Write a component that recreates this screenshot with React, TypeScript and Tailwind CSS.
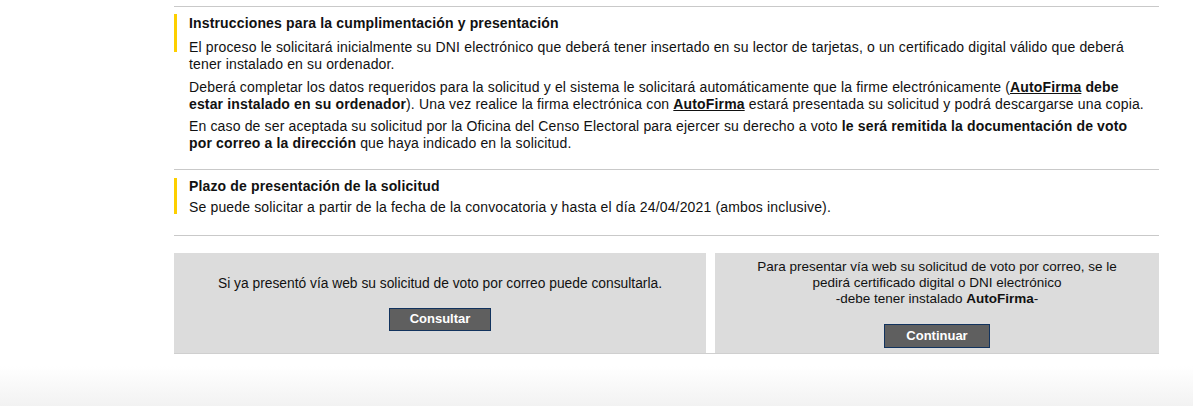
export default function App() {
  return (
    <div className="min-h-screen bg-white text-[#111] font-['Liberation_Sans',Arial,sans-serif]">
      <div className="ml-[174px] w-[985px] pt-[6px]">
        <hr className="border-0 border-t border-[#c9c9c9]" />

        <section className="grid grid-cols-[3px_1fr] gap-x-[12px] pt-[7px] pb-[17px]">
          <div className="h-[38px] bg-[#fdcf00]" />
          <div className="text-[14px] leading-[17px] tracking-[0.15px] whitespace-nowrap">
            <h2 className="font-bold pt-[1px] mb-[7px]">Instrucciones para la cumplimentación y presentación</h2>
            <p className="mb-[6px]">
              El proceso le solicitará inicialmente su DNI electrónico que deberá tener insertado en su lector de tarjetas, o un certificado digital válido que deberá
              <br />
              tener instalado en su ordenador.
            </p>
            <p className="mb-[5px]">
              Deberá completar los datos requeridos para la solicitud y el sistema le solicitará automáticamente que la firme electrónicamente (<a className="font-bold underline">AutoFirma</a> <strong>debe</strong>
              <br />
              <strong>estar instalado en su ordenador</strong>). Una vez realice la firma electrónica con <a className="font-bold underline">AutoFirma</a> estará presentada su solicitud y podrá descargarse una copia.
            </p>
            <p>
              En caso de ser aceptada su solicitud por la Oficina del Censo Electoral para ejercer su derecho a voto <strong>le será remitida la documentación de voto</strong>
              <br />
              <strong>por correo a la dirección</strong> que haya indicado en la solicitud.
            </p>
          </div>
        </section>

        <hr className="border-0 border-t border-[#c9c9c9]" />

        <section className="grid grid-cols-[3px_1fr] gap-x-[12px] pt-[8px] pb-[19px]">
          <div className="h-[36px] bg-[#fdcf00]" />
          <div className="text-[14px] leading-[17px] tracking-[0.15px]">
            <h2 className="font-bold mb-[4px]">Plazo de presentación de la solicitud</h2>
            <p>Se puede solicitar a partir de la fecha de la convocatoria y hasta el día 24/04/2021 (ambos inclusive).</p>
          </div>
        </section>

        <hr className="border-0 border-t border-[#c9c9c9]" />

        <div className="mt-[17px] flex gap-[9px] border-b border-[#cfcfcf] leading-[16px] text-center">
          <div className="w-[532px] h-[100px] bg-[#dcdcdc] flex flex-col items-center justify-center">
            <p className="text-[13.8px]">Si ya presentó vía web su solicitud de voto por correo puede consultarla.</p>
            <button className="mt-[16px] h-[23px] px-[20px] bg-[#5f5f5f] border border-[#12335e] text-white font-bold text-[13px]">
              Consultar
            </button>
          </div>
          <div className="flex-1 h-[100px] bg-[#dcdcdc] flex flex-col items-center justify-center">
            <p className="text-[13.5px]">
              Para presentar vía web su solicitud de voto por correo, se le
              <br />
              pedirá certificado digital o DNI electrónico
              <br />
              -debe tener instalado <strong>AutoFirma</strong>-
            </p>
            <button className="mt-[17px] h-[24px] px-[21px] bg-[#5f5f5f] border border-[#12335e] text-white font-bold text-[13px]">
              Continuar
            </button>
          </div>
        </div>
      </div>

      <div className="mt-[12px] h-[41px] bg-linear-to-b from-white to-[#f2f2f2]" />
    </div>
  );
}
